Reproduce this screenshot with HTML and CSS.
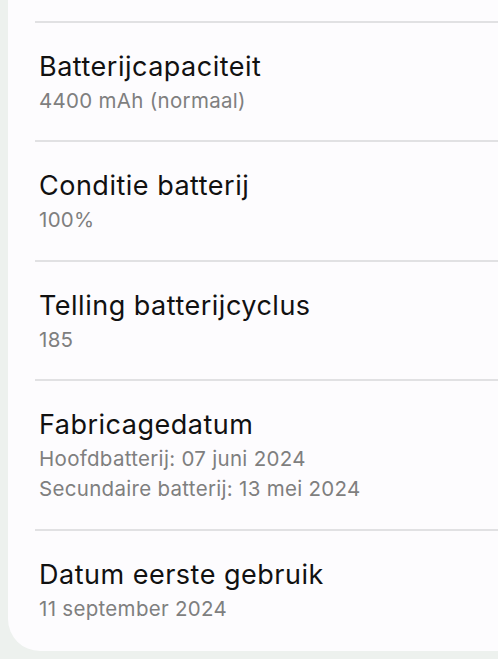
FILE: index.html
```html
<!DOCTYPE html>
<html lang="nl">
<head>
    <meta charset="UTF-8">
    <meta name="viewport" content="width=device-width, initial-scale=1.0">
    <title>Batterij-informatie</title>
    <link rel="stylesheet" href="styles.css">
</head>
<body>
    <div class="card">
        <div class="item">
            <div class="title">Batterijcapaciteit</div>
            <div class="sub">4400 mAh (normaal)</div>
        </div>
        <div class="item">
            <div class="title">Conditie batterij</div>
            <div class="sub">100%</div>
        </div>
        <div class="item">
            <div class="title">Telling batterijcyclus</div>
            <div class="sub">185</div>
        </div>
        <div class="item">
            <div class="title">Fabricagedatum</div>
            <div class="sub">Hoofdbatterij: 07 juni 2024</div>
            <div class="sub">Secundaire batterij: 13 mei 2024</div>
        </div>
        <div class="item">
            <div class="title">Datum eerste gebruik</div>
            <div class="sub">11 september 2024</div>
        </div>
    </div>
</body>
</html>
```

FILE: styles.css
```css
html, body {
    margin: 0;
    height: 100%;
}
body {
    background: #edf1ee;
    font-family: Inter, "Noto Sans", sans-serif;
    overflow: hidden;
}
.card {
    margin-left: 8px;
    padding-top: 21px;
    padding-bottom: 27px;
    background: #fdfcfe;
    border-bottom-left-radius: 32px;
}
.item {
    margin-left: 27px;
    padding: 25px 0 24.4px 4px;
    border-top: 2px solid #e1e1e3;
}
.item:last-child {
    padding-bottom: 0;
}
.title {
    font-size: 27px;
    line-height: 38px;
    letter-spacing: 0.5px;
    color: #111111;
}
.sub {
    font-size: 20.5px;
    line-height: 30px;
    letter-spacing: 0.3px;
    color: #7f7f7f;
}
```
